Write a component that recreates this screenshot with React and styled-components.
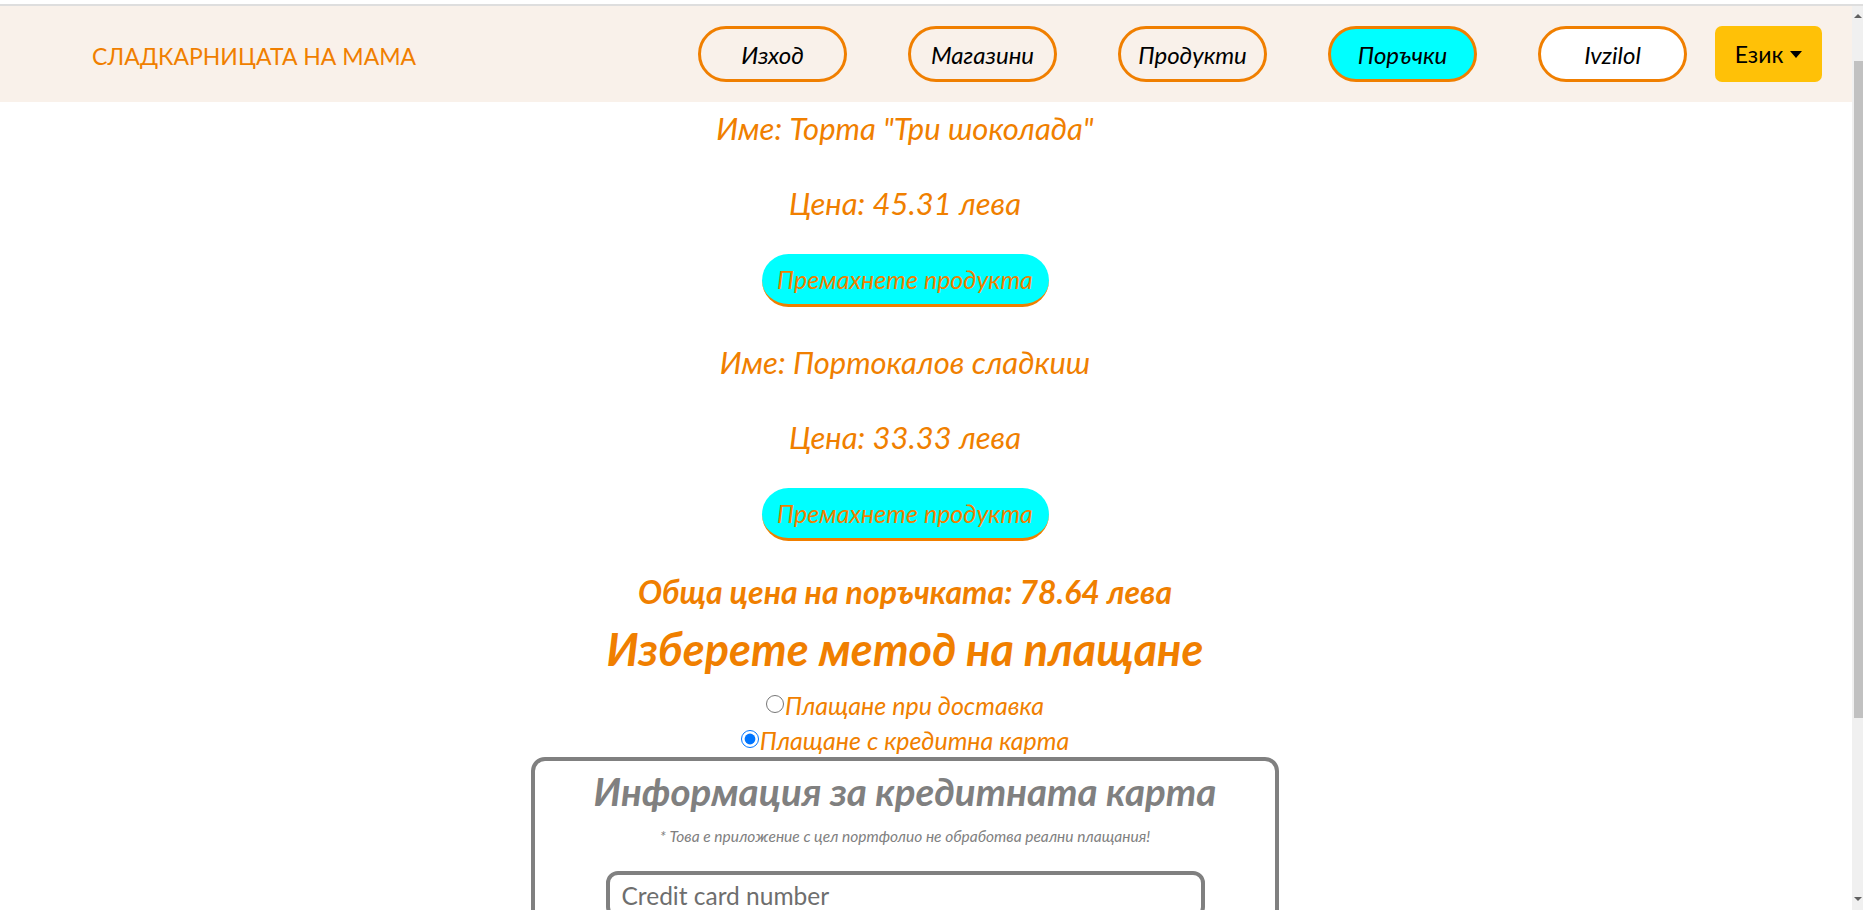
import { useState } from "react";
import styled, { createGlobalStyle } from "styled-components";

const orange = "#f07f00";
const gray = "#808080";

const GlobalStyle = createGlobalStyle`
  html, body {
    margin: 0;
    padding: 0;
  }
  body {
    font-family: Lato, "Noto Sans", sans-serif;
    background: #fff;
  }
`;

const orders = [
  { id: 1, name: 'Торта "Три шоколада"', price: "45.31" },
  { id: 2, name: "Портокалов сладкиш", price: "33.33" },
];

export default function App() {
  const [method, setMethod] = useState("card");

  return (
    <Page>
      <GlobalStyle />
      <Content>
        <Header>
          <Brand href="#">СЛАДКАРНИЦАТА НА МАМА</Brand>
          <NavList>
            <NavPill href="#">Изход</NavPill>
            <NavPill href="#">Магазини</NavPill>
            <NavPill href="#">Продукти</NavPill>
            <NavPill href="#" $bg="#00ffff">
              Поръчки
            </NavPill>
            <NavPill href="#" $bg="#fff">
              Ivzilol
            </NavPill>
          </NavList>
          <LangButton type="button">
            Език
            <Caret />
          </LangButton>
        </Header>

        <Main>
          <OrderList>
            {orders.map((o) => (
              <Item key={o.id}>
                <ItemLine>Име: {o.name}</ItemLine>
                <ItemLine>Цена: {o.price} лева</ItemLine>
                <RemoveButton type="button">Премахнете продукта</RemoveButton>
              </Item>
            ))}
          </OrderList>

          <Total>Обща цена на поръчката: 78.64 лева</Total>
          <Heading>Изберете метод на плащане</Heading>

          <RadioGroup>
            <RadioRow>
              <Radio
                type="radio"
                name="pay"
                checked={method === "cash"}
                onChange={() => setMethod("cash")}
              />
              Плащане при доставка
            </RadioRow>
            <RadioRow>
              <Radio
                type="radio"
                name="pay"
                checked={method === "card"}
                onChange={() => setMethod("card")}
              />
              Плащане с кредитна карта
            </RadioRow>
          </RadioGroup>

          <CardBox>
            <CardTitle>Информация за кредитната карта</CardTitle>
            <Note>* Това е приложение с цел портфолио не обработва реални плащания!</Note>
            <CardInput placeholder="Credit card number" />
            <CardInput placeholder="Expiration date (MM/YY)" />
            <CardInput placeholder="CVV" />
            <PayButton type="button">Плащане</PayButton>
          </CardBox>
        </Main>
      </Content>

      {/* window scrollbar, partly cut off at the right edge */}
      <ScrollBar>
        <Arrow />
        <Thumb />
        <Arrow $down />
      </ScrollBar>
    </Page>
  );
}

const Page = styled.div`
  display: flex;
  align-items: flex-start;
  margin-top: 4px;
  border-top: 2px solid #dedede;
`;

const Content = styled.div`
  flex: 1;
  min-width: 0;
`;

const ScrollBar = styled.div`
  flex: none;
  display: flex;
  flex-direction: column;
  width: 11px;
  height: 904px;
  background: #f0f0f0;
`;

const Arrow = styled.span`
  width: 0;
  height: 0;
  margin: ${(p) => (p.$down ? "auto 0 9px 2px" : "8px 0 0 2px")};
  border-left: 4px solid transparent;
  border-right: 4px solid transparent;
  ${(p) =>
    p.$down ? "border-top: 4px solid #606060;" : "border-bottom: 4px solid #606060;"}
`;

const Thumb = styled.div`
  margin: 43px 0 0 2px;
  height: 657px;
  background: #c1c1c1;
`;

const Header = styled.header`
  display: flex;
  align-items: center;
  height: 96px;
  padding: 0 30px 0 92px;
  background: #f9f1ea;
`;

const Brand = styled.a`
  padding-top: 4px;
  font-size: 23px;
  color: ${orange};
  text-decoration: none;
`;

const NavList = styled.nav`
  display: flex;
  gap: 61px;
  margin-left: auto;
`;

const NavPill = styled.a`
  display: flex;
  align-items: center;
  justify-content: center;
  box-sizing: border-box;
  width: 149px;
  height: 56px;
  border: 3px solid ${orange};
  border-radius: 28px;
  background: ${(p) => p.$bg || "transparent"};
  color: #000;
  font-size: 24px;
  font-style: italic;
  text-decoration: none;
`;

const LangButton = styled.button`
  display: flex;
  align-items: center;
  justify-content: center;
  gap: 7px;
  margin-left: 28px;
  width: 107px;
  height: 56px;
  border: 0;
  border-radius: 7px;
  background: #ffc107;
  color: #000;
  font-family: inherit;
  font-size: 23px;
`;

const Caret = styled.span`
  width: 0;
  height: 0;
  border-top: 7px solid #000;
  border-left: 6px solid transparent;
  border-right: 6px solid transparent;
`;

const Main = styled.main`
  display: flex;
  flex-direction: column;
  align-items: center;
  padding: 6px 42px 40px 0;
  text-align: center;
`;

const OrderList = styled.div`
  display: flex;
  flex-direction: column;
  align-items: center;
  gap: 35px;
`;

const Item = styled.div`
  display: flex;
  flex-direction: column;
  align-items: center;
`;

const ItemLine = styled.p`
  margin: 0;
  font-size: 31px;
  line-height: 40px;
  font-style: italic;
  color: ${orange};

  & + & {
    margin-top: 35px;
  }
`;

const RemoveButton = styled.button`
  margin-top: 31px;
  width: 287px;
  height: 53px;
  border: 0;
  border-bottom: 3px solid ${orange};
  border-radius: 27px;
  background: #00ffff;
  color: ${orange};
  font-family: inherit;
  font-size: 25px;
  font-style: italic;
`;

const Total = styled.h3`
  margin: 31px 0 0;
  font-size: 32px;
  line-height: 40px;
  font-weight: 700;
  font-style: italic;
  color: ${orange};
`;

const Heading = styled.h1`
  margin: 9px 0 0;
  font-size: 45px;
  line-height: 56px;
  font-weight: 700;
  font-style: italic;
  color: ${orange};
`;

const RadioGroup = styled.div`
  display: flex;
  flex-direction: column;
  align-items: center;
  margin-top: 10px;
`;

const RadioRow = styled.label`
  display: flex;
  align-items: center;
  height: 35px;
  font-size: 25px;
  font-style: italic;
  color: ${orange};
`;

const Radio = styled.input`
  width: 18px;
  height: 18px;
  margin: 0 1px 2px 0;
`;

const CardBox = styled.section`
  display: flex;
  flex-direction: column;
  align-items: center;
  box-sizing: border-box;
  width: 748px;
  padding: 6px 0 40px;
  border: 4px solid ${gray};
  border-radius: 14px;
`;

const CardTitle = styled.h2`
  margin: 0;
  font-size: 38.5px;
  line-height: 48px;
  font-weight: 700;
  font-style: italic;
  color: ${gray};
`;

const Note = styled.p`
  margin: 9px 0 0;
  font-size: 15.5px;
  line-height: 24px;
  font-style: italic;
  color: ${gray};
`;

const CardInput = styled.input`
  box-sizing: border-box;
  width: 599px;
  height: 48px;
  margin-top: 23px;
  padding: 0 12px;
  border: 4px solid ${gray};
  border-radius: 12px;
  font-family: inherit;
  font-size: 24.5px;
  color: ${gray};
  outline: none;

  & + & {
    margin-top: 20px;
  }

  &::placeholder {
    color: #6e6e6e;
  }
`;

const PayButton = styled.button`
  margin-top: 24px;
  width: 220px;
  height: 52px;
  border: 0;
  border-bottom: 3px solid ${orange};
  border-radius: 26px;
  background: #00ffff;
  color: ${orange};
  font-family: inherit;
  font-size: 25px;
  font-style: italic;
`;
